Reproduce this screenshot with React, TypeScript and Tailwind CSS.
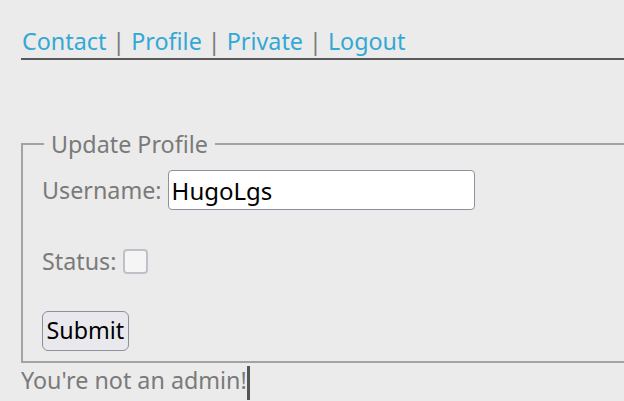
import React from "react";

export default function App() {
  return (
    <div
      className="w-[624px] h-[401px] overflow-hidden bg-[#ebebeb] pl-[21px]"
      style={{ fontFamily: '"Noto Sans", sans-serif' }}
    >
      <nav className="pt-[25px] w-[640px] border-b-2 border-[#5a5a5a] text-[23.3px] leading-[32px] text-[#7a7a7a] pl-[1px] pb-[1px]">
        <a className="text-[#33a8d4]">Contact</a> | <a className="text-[#33a8d4]">Profile</a> |{" "}
        <a className="text-[#33a8d4]">Private</a> | <a className="text-[#33a8d4]">Logout</a>
      </nav>
      <fieldset className="mt-[69px] w-[640px] h-[234px] border-2 border-[#a3a3a3] pl-[19px] pr-0 text-[23.3px] text-[#7a7a7a]">
        <legend className="px-[7px] ml-[2px] leading-[30px]">Update Profile</legend>
        <div className="flex items-center mt-[11px]">
          <span>Username:</span>
          <input
            className="ml-[6px] w-[307px] h-[40px] bg-white border border-[#8f8f9d] rounded-[4px] px-[3px] text-[24px] text-black outline-none"
            defaultValue="HugoLgs"
          />
        </div>
        <div className="flex items-center mt-[34px]">
          <span>Status:</span>
          <span className="ml-[7px] w-[25px] h-[25px] rounded-[4px] border-2 border-[#c0c0c8] bg-[#f5f5f5]" />
        </div>
        <button className="mt-[32px] h-[40px] px-[3.5px] border border-[#8f8f9d] rounded-[6px] bg-[#e9e9ed] text-[23.3px] text-black leading-none">
          Submit
        </button>
      </fieldset>
      <p className="text-[23.3px] text-[#7a7a7a] leading-[34px] mt-0">
        You're not an admin!<span className="inline-block align-middle w-[3px] h-[34px] bg-[#555]" />
      </p>
    </div>
  );
}
